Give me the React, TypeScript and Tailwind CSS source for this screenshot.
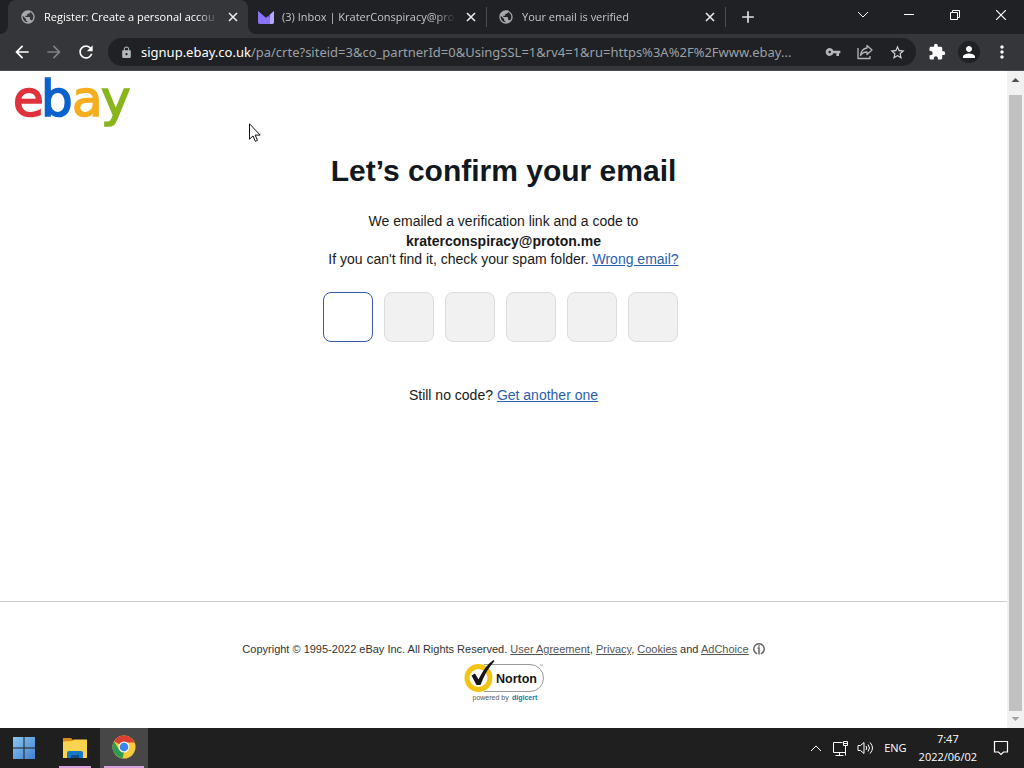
import type { ReactNode } from "react";
import {
  MdPublic,
  MdAdd,
  MdArrowBack,
  MdArrowForward,
  MdRefresh,
  MdLock,
  MdVpnKey,
  MdStarBorder,
  MdExtension,
  MdPerson,
  MdMoreVert,
} from "react-icons/md";

const uiFont = "font-['Open_Sans','Noto_Sans',sans-serif]";

function ProtonMailIcon() {
  return (
    <svg viewBox="0 0 16 14" className="h-3.5 w-4" aria-hidden="true">
      <path d="M0 1 8 8l8-7v11a2 2 0 0 1-2 2H2a2 2 0 0 1-2-2z" fill="#6d4aff" />
      <path d="M0 1v11a2 2 0 0 0 2 2h10V8L10 6.300 8 8z" fill="#8a72f8" />
      <path d="M12 4.500 16 1v11a2 2 0 0 1-2 2h-2z" fill="#b6a6ff" />
    </svg>
  );
}

function TabContent({ icon, title, active = false }: { icon: ReactNode; title: string; active?: boolean }) {
  return (
    <>
      <span className="flex w-4 shrink-0 justify-center">{icon}</span>
      <span
        className={
          active
            ? "min-w-0 flex-1 overflow-hidden whitespace-nowrap text-[11px] leading-4 text-white [mask-image:linear-gradient(to_right,black_88%,transparent)]"
            : "min-w-0 flex-1 overflow-hidden whitespace-nowrap text-[11px] leading-4 text-[#c4c7cb] [mask-image:linear-gradient(to_right,black_88%,transparent)]"
        }
      >
        {title}
      </span>
      <button type="button" aria-label={`Close ${title}`} className="shrink-0 text-[#e8eaed]">
        <svg viewBox="0 0 14 14" className="size-3.5" fill="none" stroke="currentColor" strokeWidth="1.600">
          <path d="m3 3 8 8M11 3l-8 8" />
        </svg>
      </button>
    </>
  );
}

function TabStrip() {
  return (
    <div className="flex h-[34px] bg-[#35363a]">
      <div className="w-2 shrink-0 rounded-br-lg bg-[#202124]" />
      <div className="flex w-60 min-w-0 bg-[#202124]">
        <div className="flex w-full items-center gap-2 rounded-t-lg bg-[#35363a] pr-2 pl-3">
          <TabContent active icon={<MdPublic size={16} className="text-[#a5a8ac]" />} title="Register: Create a personal accou" />
        </div>
      </div>
      <div className="flex min-w-0 flex-1 items-center rounded-bl-lg bg-[#202124]">
        <div className="flex w-[239px] min-w-0 items-center gap-2 border-r border-[#4b4d51] py-0.5 pr-2 pl-2.5">
          <TabContent icon={<ProtonMailIcon />} title="(3) Inbox | KraterConspiracy@pro" />
        </div>
        <div className="flex w-[239px] min-w-0 items-center gap-2 border-r border-[#4b4d51] py-0.5 pr-2 pl-[11px]">
          <TabContent icon={<MdPublic size={16} className="text-[#a5a8ac]" />} title="Your email is verified" />
        </div>
        <button type="button" aria-label="New tab" className="ml-3 text-[#dfe1e5]">
          <MdAdd size={20} />
        </button>
        <div className="ml-auto flex h-full items-center pb-1 text-white">
          <button type="button" aria-label="Search tabs" className="flex w-[46px] justify-center">
            <svg viewBox="0 0 12 8" className="h-2 w-3" fill="none" stroke="currentColor">
              <path d="m1 1 5 5 5-5" />
            </svg>
          </button>
          <button type="button" aria-label="Minimise" className="flex w-[46px] justify-center">
            <svg viewBox="0 0 10 10" className="size-2.5" fill="none" stroke="currentColor">
              <path d="M0 4.500h10" />
            </svg>
          </button>
          <button type="button" aria-label="Restore" className="flex w-[46px] justify-center">
            <svg viewBox="0 0 10 10" className="size-2.5" fill="none" stroke="currentColor">
              <path d="M.5 2.500h7v7h-7zM2.500 2.500v-2h7v7h-2" />
            </svg>
          </button>
          <button type="button" aria-label="Close window" className="flex w-[46px] justify-center">
            <svg viewBox="0 0 10 10" className="size-2.5" fill="none" stroke="currentColor" strokeWidth="1.200">
              <path d="m0 0 10 10M10 0 0 10" />
            </svg>
          </button>
        </div>
      </div>
    </div>
  );
}

function Toolbar() {
  return (
    <div className="flex h-[37px] items-center border-b border-[#4c4c50] bg-[#35363a] pr-3 pl-3 text-white">
      <div className="flex shrink-0 gap-3">
        <button type="button" aria-label="Back">
          <MdArrowBack size={20} />
        </button>
        <button type="button" aria-label="Forward" className="text-[#7e8084]">
          <MdArrowForward size={20} />
        </button>
        <button type="button" aria-label="Reload">
          <MdRefresh size={20} />
        </button>
      </div>
      <div className="ml-3 flex h-7 min-w-0 flex-1 items-center rounded-full bg-[#202124] pr-2.5 pl-3 text-[#b4b7bb]">
        <MdLock size={13} className="shrink-0" />
        <p className="ml-2 min-w-0 flex-1 overflow-hidden whitespace-nowrap font-['Noto_Sans',sans-serif] text-[13px] leading-5 text-[#9aa0a6]">
          <span className="text-white">signup.ebay.co.uk</span>
          /pa/crte?siteid=3&amp;co_partnerId=0&amp;UsingSSL=1&amp;rv4=1&amp;ru=https%3A%2F%2Fwww.ebay...
        </p>
        <div className="ml-1 flex shrink-0 items-center gap-4">
          <button type="button" aria-label="Passwords">
            <MdVpnKey size={16} />
          </button>
          <button type="button" aria-label="Share">
            <svg viewBox="0 0 16 16" className="size-4" fill="none" stroke="currentColor" strokeWidth="1.300" strokeLinejoin="round">
              <path d="M1 4v10.500h12V12" />
              <path d="M10 1.500 15 6l-5 4.500V8C7 8 5 9 3.500 11.500 4 7 6 4.500 10 4z" />
            </svg>
          </button>
          <button type="button" aria-label="Bookmark this page">
            <MdStarBorder size={17} className="text-[#d5d7da]" />
          </button>
        </div>
      </div>
      <div className="ml-3 flex shrink-0 items-center gap-3">
        <button type="button" aria-label="Extensions">
          <MdExtension size={18} />
        </button>
        <button type="button" aria-label="Profile" className="flex size-[22px] items-center justify-center rounded-full bg-[#202124]">
          <MdPerson size={18} />
        </button>
        <button type="button" aria-label="Menu">
          <MdMoreVert size={20} />
        </button>
      </div>
    </div>
  );
}

function EbayLogo() {
  return (
    <svg viewBox="0 0 120 50" className="h-[50px] w-[120px] font-['DejaVu_Sans',sans-serif]" role="img" aria-label="eBay">
      <g fontSize="50" strokeWidth="1.600">
        <text x="-1" y="39" fill="#e0323c" stroke="#e0323c">e</text>
        <text x="87" y="39" fill="#88b51c" stroke="#88b51c">y</text>
        <text x="58" y="39" fill="#f4ae1e" stroke="#f4ae1e">a</text>
        <text x="27" y="39" fill="#0c62cc" stroke="#0c62cc">b</text>
      </g>
    </svg>
  );
}

function NortonSeal() {
  return (
    <svg viewBox="0 0 80 44" className="h-11 w-20 font-['Liberation_Sans',Arial,sans-serif]" role="img" aria-label="Norton powered by digicert">
      <path d="M20 5.500h46a13.500 13.500 0 0 1 0 27H20" fill="none" stroke="#9a9a9a" />
      <circle cx="14.500" cy="19" r="11.500" fill="#fff" stroke="#f4c414" strokeWidth="5" />
      <path d="m7.500 16.500 3.500-2 3.500 6C18.500 12 23.500 5 29.500 1l1 1C25 8 20 16 16.500 26h-4z" fill="#161616" />
      <text x="32" y="23.500" fontSize="12.500" fontWeight="700" fill="#161616">Norton</text>
      <text x="8.500" y="41" fontSize="7" fill="#555">powered by</text>
      <text x="48" y="41" fontSize="7" fontWeight="700" fill="#0e7dab">digicert</text>
      <path d="M76 6h3" stroke="#aaa" />
    </svg>
  );
}

const cells = [1, 2, 3, 4, 5, 6];
const footerLink = "text-[#555] underline";

function Page() {
  return (
    <main className="flex min-w-0 flex-1 flex-col bg-white font-['Liberation_Sans',Arial,sans-serif] text-[#191919]">
      <header className="px-[14px] pt-1.5">
        <a href="#home" className="inline-block align-top">
          <EbayLogo />
        </a>
      </header>
      <section className="flex flex-1 flex-col items-center text-center text-sm">
        <h1 className="mt-6 text-[30px] leading-10 font-bold text-[#111820]">Let’s confirm your email</h1>
        <p className="mt-5 leading-5">We emailed a verification link and a code to</p>
        <p className="leading-5 font-bold">kraterconspiracy@proton.me</p>
        <p className="leading-4">
          If you can't find it, check your spam folder.{" "}
          <a href="#email" className="text-[#2b5fb0] underline">Wrong email?</a>
        </p>
        <div className="mt-[25px] flex gap-[11px] pr-1.5">
          {cells.map((n) => (
            <input
              key={n}
              aria-label={`Digit ${n}`}
              disabled={n > 1}
              maxLength={1}
              className="size-[50px] rounded-lg border border-[#3a5aa8] bg-white text-center text-xl outline-none disabled:border-[#dcdcdc] disabled:bg-[#f1f1f1]"
            />
          ))}
        </div>
        <p className="mt-[43px] leading-5">
          Still no code?{" "}
          <a href="#resend" className="text-[#2b5fb0] underline">Get another one</a>
        </p>
      </section>
      <footer className="flex flex-col items-center border-t border-[#ccc] pt-[39px] pb-[25px] text-[11px] leading-4 text-[#333]">
        <p className="flex items-center">
          <span>
            Copyright © 1995-2022 eBay Inc. All Rights Reserved.{" "}
            <a href="#agreement" className={footerLink}>User Agreement</a>,{" "}
            <a href="#privacy" className={footerLink}>Privacy</a>,{" "}
            <a href="#cookies" className={footerLink}>Cookies</a> and{" "}
            <a href="#adchoice" className={footerLink}>AdChoice</a>
          </span>
          <svg viewBox="0 0 12 12" className="ml-1 size-3" fill="none" stroke="#666" strokeWidth="1.500" aria-hidden="true">
            <path d="M4.200 10.900A5.200 5.200 0 1 1 7.800 10.900" />
            <path d="M4.500 5H6v6.500M6 2.300v1.500" />
          </svg>
        </p>
        <div className="mt-0.5">
          <NortonSeal />
        </div>
      </footer>
    </main>
  );
}

function Scrollbar() {
  return (
    <div className="flex w-[17px] shrink-0 flex-col items-center bg-[#f1f1f1]" aria-hidden="true">
      <svg viewBox="0 0 17 24" className="h-6 w-[17px]">
        <path d="m4.500 11 4-4 4 4z" fill="#505050" />
      </svg>
      <div className="w-[13px] flex-1 bg-[#c1c1c1]" />
      <svg viewBox="0 0 17 17" className="size-[17px]">
        <path d="m4.500 6 4 4 4-4z" fill="#a3a3a3" />
      </svg>
    </div>
  );
}

function Taskbar() {
  return (
    <div className="flex h-10 shrink-0 bg-[#1f1f1f] text-white">
      <button type="button" aria-label="Start" className="flex w-12 items-center justify-center">
        <svg viewBox="0 0 22 22" className="size-[22px]">
          <defs>
            <linearGradient id="win" x1="0" y1="0" x2="1" y2="1">
              <stop offset="0" stopColor="#8cc8f0" />
              <stop offset="1" stopColor="#3f7fd0" />
            </linearGradient>
          </defs>
          <path d="M0 0h10.500v10.500H0zM11.500 0H22v10.500H11.500zM0 11.500h10.500V22H0zM11.500 11.500H22V22H11.500z" fill="url(#win)" />
        </svg>
      </button>
      <button type="button" aria-label="File Explorer" className="ml-[3px] flex w-12 flex-col items-center justify-end">
        <svg viewBox="0 0 26 22" className="mb-[7px] h-[22px] w-[26px]">
          <path d="M1 1h8l2 2v4H1z" fill="#d98d18" />
          <path d="M1 4.500 10 4l2-1.500h13V21H1z" fill="#fbd34e" />
          <path d="M5 21v-5a2 2 0 0 1 2-2h12a2 2 0 0 1 2 2v5z" fill="#1978c4" />
          <path d="M9 18h8v3H9z" fill="#0e4f8c" />
        </svg>
        <span className="h-0.5 w-8 bg-[#d6a0dc]" />
      </button>
      <button type="button" aria-label="Google Chrome" className="ml-px flex w-12 flex-col items-center justify-end bg-[#474747]">
        <svg viewBox="0 0 24 24" className="mb-[7px] size-6">
          <circle cx="12" cy="12" r="11.500" fill="#f8cb3a" />
          <path d="M12 12 2 6.300A11.500 11.500 0 0 1 22 6.500H12z" fill="#dc3f34" />
          <path d="M2 6.300 7.200 15 12 17.500 10.500 23.400A11.500 11.500 0 0 1 2 6.300z" fill="#2f9b50" />
          <path d="m7 9 1-3h14l.5 1.500H12z" fill="#dc3f34" />
          <circle cx="12" cy="12" r="5.500" fill="#f3f6fa" />
          <circle cx="12" cy="12" r="4.300" fill="#3e82ea" />
        </svg>
        <span className="h-0.5 w-10 bg-[#d6a0dc]" />
      </button>
      <div className="ml-auto flex items-center pr-[15px] text-[11px]">
        <svg viewBox="0 0 12 8" className="h-2 w-3" fill="none" stroke="currentColor" aria-label="Hidden icons">
          <path d="m1 7 5-5 5 5" />
        </svg>
        <svg viewBox="0 0 17 17" className="ml-2.5 size-[17px]" fill="none" stroke="currentColor" aria-label="Network">
          <path d="M10.500 2.500h-9v10h12V7M7.500 12.500v3M3.500 15.500h8M11.500 1.500h4v4h-4zM13.500 5.500v10M12 3.500h3" />
        </svg>
        <svg viewBox="0 0 17 14" className="ml-2 h-3.5 w-[17px]" fill="none" stroke="currentColor" aria-label="Volume">
          <path d="M1 4.500h2.500L7 1.500v11l-3.500-3H1zM9 5q1.500 2 0 4M11 3.500q3 3.500 0 7M13 1.500q5 5.500 0 11" />
        </svg>
        <span className="ml-2.5">ENG</span>
        <time className="ml-3 text-center leading-[18px]">
          7:47
          <br />
          2022/06/02
        </time>
        <button type="button" aria-label="Notifications" className="ml-4">
          <svg viewBox="0 0 16 16" className="size-4" fill="none" stroke="currentColor" strokeWidth="1.200">
            <path d="M1.500 1.500h13v10.500h-4L8 14.500 5.500 12h-4z" />
          </svg>
        </button>
      </div>
    </div>
  );
}

export default function App() {
  return (
    <div className={`relative flex min-h-screen flex-col bg-white ${uiFont}`}>
      <TabStrip />
      <Toolbar />
      <div className="flex flex-1">
        <Page />
        <Scrollbar />
      </div>
      <Taskbar />
      <svg viewBox="0 0 12 19" className="pointer-events-none absolute top-[123px] left-[249px] h-[19px] w-3" aria-hidden="true">
        <path d="M.5.800v15.400l3.500-3.300 2.300 5.400 2.200-.9-2.300-5.300h5z" fill="#fff" stroke="#111" />
      </svg>
    </div>
  );
}
